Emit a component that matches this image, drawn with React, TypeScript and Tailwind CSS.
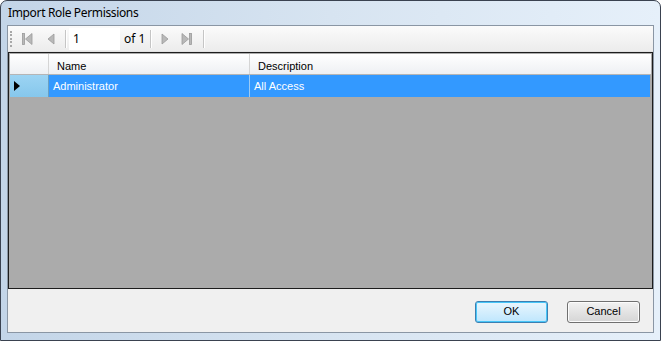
import React from "react";

const UI_FONT = "font-['Segoe_UI','Noto_Sans','Liberation_Sans',sans-serif]";
const GRID_FONT = "font-['Microsoft_Sans_Serif','Liberation_Sans','Arial',sans-serif]";

function NavIcon({ kind }: { kind: "first" | "prev" | "next" | "last" }) {
  const fill = "#b9b9b9";
  const stroke = "#9a9a9a";
  return (
    <svg width="14" height="14" viewBox="0 0 14 14">
      {kind === "first" && (
        <>
          <rect x="2.5" y="1.5" width="2" height="11" fill={fill} stroke={stroke} strokeWidth="0.8" />
          <path d="M12 1.5 L5.5 7 L12 12.5 Z" fill={fill} stroke={stroke} strokeWidth="0.8" />
        </>
      )}
      {kind === "prev" && <path d="M10 2 L4 7 L10 12 Z" fill={fill} stroke={stroke} strokeWidth="0.8" />}
      {kind === "next" && <path d="M4 2 L10 7 L4 12 Z" fill={fill} stroke={stroke} strokeWidth="0.8" />}
      {kind === "last" && (
        <>
          <path d="M2 1.5 L8.5 7 L2 12.5 Z" fill={fill} stroke={stroke} strokeWidth="0.8" />
          <rect x="9.5" y="1.5" width="2" height="11" fill={fill} stroke={stroke} strokeWidth="0.8" />
        </>
      )}
    </svg>
  );
}

function Sep({ className = "" }: { className?: string }) {
  return <div className={`mx-[2px] h-[18px] w-[2px] border-l border-[#c5c5c5] border-r border-r-white ${className}`} />;
}

export default function App() {
  return (
    <div className="h-[341px] w-[661px] overflow-hidden bg-white">
      <div className="flex h-[341px] w-[661px] flex-col rounded-t-[7px] border border-[#3a4250] bg-gradient-to-r from-[#c3d5e8] via-[#d7e4f1] to-[#e6f0fa]">
        {/* Title bar */}
        <div className={`flex h-[24px] items-center pl-[7px] text-[12px] tracking-[-0.35px] text-black ${UI_FONT}`}>
          Import Role Permissions
        </div>

        {/* Client area */}
        <div className="mx-[6px] flex h-[308px] flex-col border border-[#8a96a4] bg-[#f0f0f0]">
          {/* Toolbar */}
          <div className="flex h-[26px] items-center border-b border-[#e2e2e2] bg-gradient-to-b from-[#fbfbfb] to-[#ececec] pl-[2px]">
            <div className="mr-[2px] flex h-[18px] w-[3px] flex-col justify-between py-[1px]">
              {[0, 1, 2, 3, 4].map((i) => (
                <div key={i} className="h-[2px] w-[2px] bg-[#a8a8a8]" />
              ))}
            </div>
            <div className="flex h-[22px] w-[23px] items-center justify-center">
              <NavIcon kind="first" />
            </div>
            <div className="flex h-[22px] w-[25px] items-center justify-center">
              <NavIcon kind="prev" />
            </div>
            <Sep />
            <div className={`flex h-[22px] w-[51px] items-center bg-white pl-[4px] text-[12px] text-black ${UI_FONT}`}>
              1
            </div>
            <div className={`ml-[4px] mr-[3px] text-[12px] text-black ${UI_FONT}`}>of 1</div>
            <Sep />
            <div className="flex h-[22px] w-[21px] items-center justify-center">
              <NavIcon kind="next" />
            </div>
            <div className="flex h-[22px] w-[23px] items-center justify-center">
              <NavIcon kind="last" />
            </div>
            <Sep className="ml-[5px]" />
          </div>

          {/* Grid */}
          <div className={`h-[237px] border border-[#1d1d1d] bg-[#ababab] p-[1px] text-[11px] ${GRID_FONT}`}>
            <div className="flex h-[21px] border-b border-[#b5b5b5] bg-gradient-to-b from-white to-[#eef0f3]">
              <div className="w-[39px] border-r border-[#d5d5d5]" />
              <div className="w-[201px] border-r border-[#d5d5d5] pl-[8px] pt-[4px] text-black">Name</div>
              <div className="w-[400px] pl-[8px] pt-[4px] text-black">Description</div>
            </div>
            <div className="flex h-[22px]">
              <div className="flex w-[39px] items-center border-r border-[#6a9fc0] bg-gradient-to-b from-[#9cd4f3] to-[#86c7ec] pl-[4px]">
                <svg width="6" height="10" viewBox="0 0 6 10">
                  <path d="M0 0 L6 5 L0 10 Z" fill="#000" />
                </svg>
              </div>
              <div className="flex w-[201px] items-center border-r border-[#9ccbf5] bg-[#3399ff] pl-[4px] pt-[1px] text-white">
                Administrator
              </div>
              <div className="flex w-[400px] items-center bg-[#3399ff] pl-[4px] pt-[1px] text-white">All Access</div>
            </div>
          </div>

          {/* Buttons */}
          <div className={`flex flex-1 items-center justify-end gap-[19px] pr-[13px] pt-[2px] text-[11px] ${GRID_FONT}`}>
            <button className="h-[22px] w-[73px] rounded-[3px] border border-[#3c7fb1] bg-gradient-to-b from-[#eaf6fd] to-[#bee6fd] text-black shadow-[inset_0_0_0_1px_#48c6f8]">
              OK
            </button>
            <button className="h-[22px] w-[73px] rounded-[3px] border border-[#707070] bg-gradient-to-b from-[#f2f2f2] to-[#d5d5d5] text-black shadow-[inset_0_0_0_1px_#fcfcfc]">
              Cancel
            </button>
          </div>
        </div>
      </div>
    </div>
  );
}
